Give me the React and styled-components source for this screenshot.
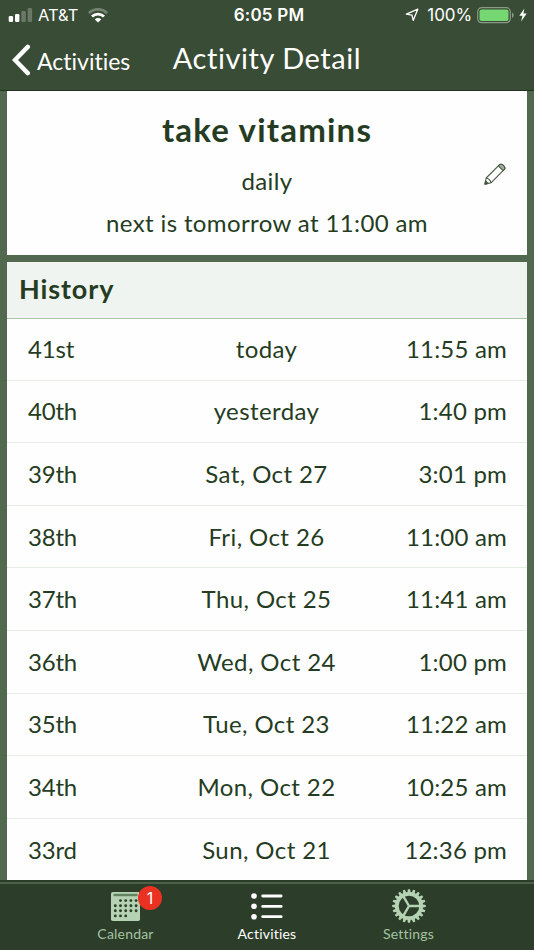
import React from 'react';
import styled, { createGlobalStyle } from 'styled-components';

const history = [
  { id: 41, count: '41st', day: 'today', time: '11:55 am' },
  { id: 40, count: '40th', day: 'yesterday', time: '1:40 pm' },
  { id: 39, count: '39th', day: 'Sat, Oct 27', time: '3:01 pm' },
  { id: 38, count: '38th', day: 'Fri, Oct 26', time: '11:00 am' },
  { id: 37, count: '37th', day: 'Thu, Oct 25', time: '11:41 am' },
  { id: 36, count: '36th', day: 'Wed, Oct 24', time: '1:00 pm' },
  { id: 35, count: '35th', day: 'Tue, Oct 23', time: '11:22 am' },
  { id: 34, count: '34th', day: 'Mon, Oct 22', time: '10:25 am' },
  { id: 33, count: '33rd', day: 'Sun, Oct 21', time: '12:36 pm' },
];

const SignalIcon = () => (
  <svg width="25" height="16" viewBox="0 0 25 16" fill="#fff">
    <rect x="0.7" y="9" width="4.4" height="6" rx="1.2" />
    <rect x="7" y="7" width="4.4" height="8" rx="1.2" />
    <rect x="13.4" y="4" width="4.4" height="11" rx="1.2" opacity="0.25" />
    <rect x="19.7" y="1" width="4.4" height="14" rx="1.2" opacity="0.25" />
  </svg>
);

const WifiIcon = () => (
  <svg width="20" height="15" viewBox="0 0 20 15" fill="none" stroke="#fff" strokeWidth="2.8">
    <path d="M1 5.2a12.7 12.7 0 0 1 18 0" opacity="0.3" />
    <path d="M4 8.6a8.5 8.5 0 0 1 12 0" />
    <path d="M10 14.6 6.8 11.4a4.6 4.6 0 0 1 6.4 0z" fill="#fff" stroke="none" />
  </svg>
);

const LocationIcon = () => (
  <svg width="14" height="14" viewBox="0 0 14 14" fill="none" stroke="#fff" strokeWidth="1.3" strokeLinejoin="round">
    <path d="M12.8 1.2 8.2 12.4 7 7.2 1.3 6.2z" />
  </svg>
);

const BatteryIcon = () => (
  <svg width="38" height="17" viewBox="0 0 38 17">
    <rect x="0.7" y="0.7" width="32.6" height="15" rx="4" fill="none" stroke="#8b9987" strokeWidth="1.2" />
    <rect x="2.5" y="2.5" width="29" height="11.4" rx="2" fill="#76d672" />
    <path d="M35 5.5c2.3 1 2.3 4.5 0 5.5z" fill="#8b9987" />
  </svg>
);

const BoltIcon = () => (
  <svg width="8" height="14" viewBox="0 0 8 14" fill="#fff">
    <path d="M5.4 0.4 0.3 7.8h3.2L2.1 13.5 7.7 5.6H4.4z" />
  </svg>
);

const BackIcon = () => (
  <svg width="20" height="32" viewBox="0 0 20 32" fill="none" stroke="#fff" strokeWidth="4.4">
    <path d="M15.8 2.9 3 16l12.8 13.1" strokeLinecap="round" strokeLinejoin="miter" />
  </svg>
);

const PencilIcon = () => (
  <svg width="22" height="22" viewBox="0 0 22 22" fill="none" stroke="#465943" strokeWidth="1.1" strokeLinejoin="round">
    <path d="M0.9 21.1 2.2 15 15.6 1.7c2-2 6.7 2.7 4.7 4.7L7 19.8z" />
    <path d="M14.4 2.9 15.6 1.7c2-2 6.7 2.7 4.7 4.7l-1.2 1.2z" fill="#a4aea2" />
    <path d="M2.2 15c2.4 0.5 4.3 2.4 4.8 4.8" />
    <path d="M1.6 18 0.9 21.1 4 20.4z" fill="#3d4f3a" />
  </svg>
);

const CalendarIcon = () => {
  const dots = [];
  for (let row = 0; row < 4; row++) {
    for (let col = 0; col < 5; col++) {
      if ((row === 0 && col === 0) || (row === 3 && col > 2)) continue;
      dots.push(<circle key={`${row}-${col}`} cx={4.3 + col * 5.2} cy={8.6 + row * 5.1} r="1.45" />);
    }
  }
  return (
    <svg width="29" height="29" viewBox="0 0 29 29">
      <rect width="29" height="29" rx="1.8" fill="#b5d3b2" />
      <rect x="2.5" y="1.8" width="24" height="2.4" fill="#65835f" />
      <g fill="#2c3f29">{dots}</g>
    </svg>
  );
};

const ListIcon = () => (
  <svg width="32" height="27" viewBox="0 0 32 27" fill="#fff">
    {[3, 13.3, 23.7].map((y) => (
      <g key={y}>
        <circle cx="3" cy={y} r="2.8" />
        <rect x="10.3" y={y - 1.4} width="21.2" height="2.8" rx="1.3" />
      </g>
    ))}
  </svg>
);

const TEETH = Array.from({ length: 20 }, (_, i) => i * 18);

const GearIcon = () => (
  <svg width="34" height="34" viewBox="-17 -17 34 34">
    <g fill="#b5d3b2">
      {TEETH.map((angle) => (
        <path key={angle} d="M-1.7-13-1.1-16.8h2.2L1.7-13z" transform={`rotate(${angle})`} />
      ))}
    </g>
    <circle r="12.2" fill="none" stroke="#b5d3b2" strokeWidth="3.8" />
    <path d="M0 0h11M0 0-5.6-9.6M0 0-5.6 9.6" stroke="#b5d3b2" strokeWidth="2.4" />
  </svg>
);

const App = () => (
  <>
    <GlobalStyle />
    <Screen>
      <StatusBar>
        <StatusGroup>
          <SignalIcon />
          <Carrier>AT&amp;T</Carrier>
          <WifiIcon />
        </StatusGroup>
        <Clock>6:05 PM</Clock>
        <StatusGroup $end>
          <LocationIcon />
          <Percent>100%</Percent>
          <BatteryIcon />
          <BoltIcon />
        </StatusGroup>
      </StatusBar>
      <NavBar>
        <BackButton>
          <BackIcon />
          <BackLabel>Activities</BackLabel>
        </BackButton>
        <NavTitle>Activity Detail</NavTitle>
      </NavBar>
      <Content>
        <Summary>
          <SummaryTitle>take vitamins</SummaryTitle>
          <SummaryLine>daily</SummaryLine>
          <SummaryLine>next is tomorrow at 11:00 am</SummaryLine>
          <EditButton aria-label="Edit">
            <PencilIcon />
          </EditButton>
        </Summary>
        <History>
          <HistoryHeader>History</HistoryHeader>
          <HistoryList>
            {history.map((item) => (
              <HistoryItem key={item.id}>
                <Count>{item.count}</Count>
                <Day>{item.day}</Day>
                <Time>{item.time}</Time>
              </HistoryItem>
            ))}
          </HistoryList>
        </History>
      </Content>
      <TabBar>
        <Tab>
          <TabIcon>
            <CalendarIcon />
            <Badge>1</Badge>
          </TabIcon>
          Calendar
        </Tab>
        <Tab $active>
          <TabIcon>
            <ListIcon />
          </TabIcon>
          Activities
        </Tab>
        <Tab>
          <TabIcon>
            <GearIcon />
          </TabIcon>
          Settings
        </Tab>
      </TabBar>
    </Screen>
  </>
);

export default App;

const GlobalStyle = createGlobalStyle`
  * {
    box-sizing: border-box;
  }

  body {
    margin: 0;
    background-color: #52684f;
    font-family: Lato, sans-serif;
    font-variant-ligatures: none;
  }

  svg {
    display: block;
    flex: none;
  }
`;

const Screen = styled.div`
  width: 534px;
  height: 950px;
  display: flex;
  flex-direction: column;
  overflow: hidden;
  color: #253c23;
`;

const StatusBar = styled.div`
  height: 30px;
  flex: none;
  display: grid;
  grid-template-columns: 1fr auto 1fr;
  align-items: center;
  padding: 0 7px 0 8px;
  background-color: #394c35;
  color: #fff;
  font-family: Inter, sans-serif;
  white-space: nowrap;
`;

const StatusGroup = styled.div`
  display: flex;
  align-items: center;
  justify-content: ${(props) => (props.$end ? 'flex-end' : 'flex-start')};

  svg + svg {
    margin-left: 4px;
  }
`;

const Carrier = styled.span`
  margin: 0 10px 0 5px;
  font-size: 16.5px;
`;

const Clock = styled.span`
  padding-left: 3px;
  font-size: 17px;
  font-weight: 600;
  letter-spacing: 0.2px;
`;

const Percent = styled.span`
  margin: 0 5px 0 8px;
  font-size: 17px;
  letter-spacing: -0.1px;
`;

const NavBar = styled.div`
  height: 61px;
  flex: none;
  display: grid;
  grid-template-columns: 1fr auto 1fr;
  align-items: center;
  padding: 0 12px 1px;
  background-color: #394c35;
  border-bottom: 1px solid #243021;
  color: #fff;
`;

const BackButton = styled.div`
  display: flex;
  align-items: center;
`;

const BackLabel = styled.span`
  margin: 2px 0 0 5px;
  font-size: 23px;
`;

const NavTitle = styled.div`
  margin-bottom: 4px;
  font-size: 29px;
  letter-spacing: 0.55px;
`;

const Content = styled.div`
  flex: 1;
  min-height: 0;
  overflow: hidden;
  padding: 0 7px;
`;

const Summary = styled.div`
  position: relative;
  height: 164px;
  margin-bottom: 7px;
  padding-top: 17px;
  background-color: #fefefe;
  text-align: center;
`;

const SummaryTitle = styled.div`
  height: 46px;
  line-height: 43px;
  font-size: 33px;
  font-weight: 700;
  letter-spacing: 1.2px;
`;

const SummaryLine = styled.div`
  height: 42px;
  line-height: 54px;
  font-size: 24px;
  letter-spacing: 0.38px;
`;

const EditButton = styled.div`
  position: absolute;
  top: 72px;
  right: 21px;
`;

const History = styled.div`
  background-color: #fefefe;
`;

const HistoryHeader = styled.div`
  height: 57px;
  padding-left: 12px;
  line-height: 53px;
  background-color: #eff4f0;
  border-bottom: 1px solid #a9c6a7;
  font-size: 27px;
  font-weight: 700;
  letter-spacing: 0.9px;
`;

const HistoryList = styled.ul`
  list-style: none;
  margin: -1px 0 0;
  padding: 0;
`;

const HistoryItem = styled.li`
  height: 62.6px;
  display: grid;
  grid-template-columns: 130px 1fr 130px;
  align-items: center;
  padding: 0 20px 1px 21px;
  border-bottom: 1px solid #e6ede5;
  font-size: 24px;
  letter-spacing: 0.2px;
`;

const Count = styled.span`
  letter-spacing: -0.2px;
`;

const Day = styled.span`
  margin-left: -2px;
  text-align: center;
  letter-spacing: 0.4px;
`;

const Time = styled.span`
  text-align: right;
`;

const TabBar = styled.div`
  height: 70px;
  flex: none;
  display: grid;
  grid-template-columns: repeat(3, 141.5px);
  justify-content: center;
  background-color: #2c3e29;
  border-top: 2px solid #2c3e29;
  box-shadow: inset 0 2px #4b6248;
`;

const Tab = styled.div`
  display: flex;
  flex-direction: column;
  align-items: center;
  color: ${(props) => (props.$active ? '#fff' : '#a5c1a1')};
  font-size: 14px;
  line-height: 19px;
  letter-spacing: 0.2px;
`;

const TabIcon = styled.div`
  position: relative;
  height: 42px;
  padding-top: 6px;
  display: flex;
  align-items: center;
`;

const Badge = styled.span`
  position: absolute;
  top: 4px;
  left: 27px;
  width: 24px;
  height: 24px;
  border-radius: 50%;
  background-color: #ea3223;
  color: #fff;
  font-family: Inter, sans-serif;
  font-size: 16px;
  line-height: 24px;
  text-align: center;
`;
